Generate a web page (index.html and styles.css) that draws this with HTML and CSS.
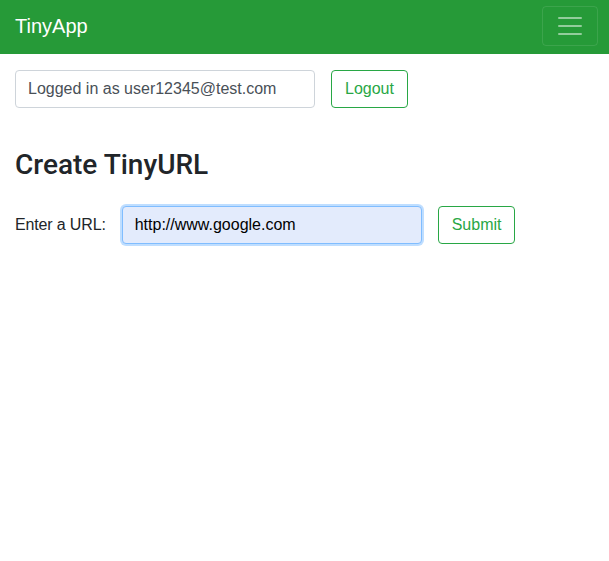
FILE: index.html
```html
<!DOCTYPE html>
<html>
<head>
<meta charset="utf-8">
<link rel="stylesheet" href="styles.css">
</head>
<body>
<nav class="navbar">
  <a class="brand" href="#">TinyApp</a>
  <button class="toggler" type="button">
    <svg class="toggler-icon" viewBox="0 0 30 30" width="30" height="30"><path d="M4 7h22M4 15h22M4 23h22" stroke="rgba(255,255,255,0.5)" stroke-width="2" stroke-linecap="round" fill="none"/></svg>
  </button>
</nav>
<main class="container">
  <div class="login-row">
    <input class="form-control" type="text" value="Logged in as user12345@test.com" readonly>
    <button class="btn" type="button">Logout</button>
  </div>
  <h3 class="title">Create TinyURL</h3>
  <form class="url-form">
    <label class="label">Enter a URL:</label>
    <input class="form-control url-input" type="text" value="http://www.google.com">
    <button class="btn" type="button">Submit</button>
  </form>
</main>
</body>
</html>
```
FILE: styles.css
```css
* { box-sizing: border-box; }
body {
  margin: 0;
  font-family: "Liberation Sans", Arial, sans-serif;
  font-size: 16px;
  line-height: 1.5;
  color: #212529;
  background: #fff;
}
.navbar {
  height: 54px;
  background: #269a38;
  display: flex;
  align-items: center;
  justify-content: space-between;
  padding: 0 11px 2px 15px;
}
.brand {
  color: #fff;
  font-size: 20px;
  text-decoration: none;
  line-height: 30px;
}
.toggler {
  width: 56px;
  height: 40px;
  padding: 4px 12px;
  background: transparent;
  border: 1px solid rgba(255,255,255,0.1);
  border-radius: 4px;
  display: flex;
  align-items: center;
  justify-content: center;
}
.toggler-icon { display: block; }
.container { padding: 16px 15px; }
.login-row {
  display: flex;
  gap: 16px;
  align-items: center;
}
.form-control {
  width: 300px;
  height: 38px;
  padding: 6px 12px;
  font-family: inherit;
  font-size: 16px;
  line-height: 1.5;
  color: #495057;
  background: #fff;
  border: 1px solid #ced4da;
  border-radius: 4px;
  outline: none;
}
.btn {
  height: 38px;
  padding: 6px 13px;
  font-family: inherit;
  font-size: 16px;
  line-height: 1.5;
  color: #28a745;
  background: transparent;
  border: 1px solid #28a745;
  border-radius: 4px;
}
.title {
  font-family: Roboto, "Liberation Sans", sans-serif;
  font-size: 28px;
  font-weight: 500;
  line-height: 1.2;
  margin: 40px 0 24px;
  color: #212529;
}
.url-form {
  display: flex;
  align-items: center;
  gap: 16px;
}
.label {
  color: #212529;
  letter-spacing: -0.15px;
}
.url-input {
  color: #000;
  background: #e3ebfc;
  border-color: #80bdff;
  box-shadow: 0 0 0 2px rgba(0,123,255,0.25);
}
```
